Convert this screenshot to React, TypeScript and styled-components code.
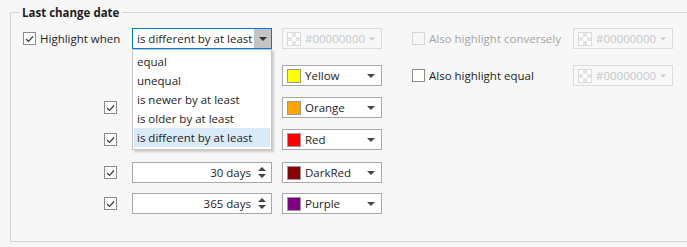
import React from "react";
import styled, { createGlobalStyle, css } from "styled-components";

const Global = createGlobalStyle`
  html, body {
    margin: 0;
    padding: 0;
    background: #f7f7f7;
    overflow: hidden;
  }
  body {
    font-family: "Segoe UI", "Open Sans", "Noto Sans", sans-serif;
    font-size: 11.5px;
    color: #1e1e1e;
  }
`;

const Page = styled.div`
  width: 687px;
  height: 247px;
  padding: 12px 0 0 10px;
  box-sizing: border-box;
  overflow: hidden;
`;

const GroupBox = styled.fieldset`
  position: relative;
  margin: 0;
  width: 720px;
  height: 230px;
  box-sizing: border-box;
  border: 1px solid #d5d5d5;
  padding: 15px 0 0 12px;
`;

const Legend = styled.div`
  position: absolute;
  top: -8px;
  left: 8px;
  padding: 0 3px 0 3px;
  background: #f7f7f7;
  font-weight: 700;
  font-size: 11.5px;
  line-height: 16px;
`;

const Rows = styled.div`
  display: flex;
  flex-direction: column;
`;

const Row = styled.div<{ $top: number }>`
  display: flex;
  align-items: center;
  height: 21px;
  margin-top: ${(p) => p.$top}px;
`;

const LeadCell = styled.div<{ $end?: boolean }>`
  width: 109px;
  display: flex;
  align-items: center;
  justify-content: ${(p) => (p.$end ? "flex-end" : "flex-start")};
  padding-right: ${(p) => (p.$end ? "15px" : "0")};
  box-sizing: border-box;
`;

const MidCell = styled.div`
  position: relative;
  width: 140px;
  height: 21px;
  margin-right: 10px;
`;

const ColorCell = styled.div`
  width: 100px;
  margin-right: 30px;
`;

const OptionCell = styled.div`
  width: 161px;
  display: flex;
  align-items: center;
`;

const Box = styled.span<{ $disabled?: boolean }>`
  width: 13px;
  height: 13px;
  box-sizing: border-box;
  border: 1px solid ${(p) => (p.$disabled ? "#d6d6d6" : "#8c8c8c")};
  background: ${(p) => (p.$disabled ? "#f7f7f7" : "#ffffff")};
  display: flex;
  align-items: center;
  justify-content: center;
  flex: none;
`;

const Label = styled.span<{ $disabled?: boolean }>`
  margin-left: 4px;
  white-space: nowrap;
  color: ${(p) => (p.$disabled ? "#a6a6a6" : "#1e1e1e")};
`;

const Check = ({ on, disabled }: { on?: boolean; disabled?: boolean }) => (
  <Box $disabled={disabled}>
    {on && (
      <svg width="9" height="8" viewBox="0 0 9 8">
        <path d="M1 4 L3.5 6.5 L8 1.5" fill="none" stroke="#3c3c3c" strokeWidth="1.2" />
      </svg>
    )}
  </Box>
);

const fieldBase = css`
  height: 21px;
  box-sizing: border-box;
  display: flex;
  align-items: center;
  background: #ffffff;
  white-space: nowrap;
`;

const Combo = styled.div<{ $focus?: boolean }>`
  ${fieldBase};
  width: 140px;
  border: 1px solid ${(p) => (p.$focus ? "#0078d7" : "#a0a0a0")};
  padding-left: 4px;
`;

const ComboText = styled.span`
  flex: 1;
`;

const ComboButton = styled.span`
  width: 17px;
  height: 19px;
  background: #c4c4c4;
  display: flex;
  align-items: center;
  justify-content: center;
`;

const ColorCombo = styled.div<{ $disabled?: boolean }>`
  ${fieldBase};
  width: 100px;
  border: 1px solid ${(p) => (p.$disabled ? "#dcdcdc" : "#a8a8a8")};
  background: ${(p) => (p.$disabled ? "#f7f7f7" : "#ffffff")};
  color: ${(p) => (p.$disabled ? "#c4c8cf" : "#1e1e1e")};
  padding: 0 6px 0 4px;
  gap: 4px;
`;

const Swatch = styled.span<{ $color: string }>`
  width: 14px;
  height: 14px;
  box-sizing: border-box;
  border: 1px solid #9a9a9a;
  background: ${(p) => p.$color};
  flex: none;
`;

const Checker = styled.span`
  width: 14px;
  height: 14px;
  box-sizing: border-box;
  border: 1px solid #dadada;
  flex: none;
  background-color: #ffffff;
  background-image: linear-gradient(45deg, #e3e3e3 25%, transparent 25%, transparent 75%, #e3e3e3 75%),
    linear-gradient(45deg, #e3e3e3 25%, transparent 25%, transparent 75%, #e3e3e3 75%);
  background-size: 8px 8px;
  background-position: 0 0, 4px 4px;
`;

const ColorName = styled.span`
  flex: 1;
`;

const Arrow = ({ color = "#444" }: { color?: string }) => (
  <svg width="8" height="4" viewBox="0 0 8 4">
    <path d="M0 0 H8 L4 4 Z" fill={color} />
  </svg>
);

const Spin = styled.div`
  ${fieldBase};
  width: 140px;
  border: 1px solid #a8a8a8;
  padding: 0 5px 0 4px;
`;

const SpinValue = styled.span`
  flex: 1;
  text-align: right;
  padding-right: 7px;
`;

const SpinArrows = styled.span`
  display: flex;
  flex-direction: column;
  gap: 3px;
`;

const List = styled.div`
  position: absolute;
  top: 21px;
  left: 0;
  width: 140px;
  box-sizing: border-box;
  border: 1px solid #c6c6c6;
  background: #ffffff;
  padding: 2px 1px;
  box-shadow: 2px 2px 2px rgba(0, 0, 0, 0.18);
  z-index: 5;
`;

const Item = styled.div<{ $selected?: boolean }>`
  height: 19px;
  line-height: 19px;
  padding-left: 3px;
  background: ${(p) => (p.$selected ? "#dbeaf7" : "transparent")};
`;

const ColorBox = ({ color, name }: { color: string; name: string }) => (
  <ColorCombo>
    <Swatch $color={color} />
    <ColorName>{name}</ColorName>
    <Arrow />
  </ColorCombo>
);

const NoColor = () => (
  <ColorCombo $disabled>
    <Checker />
    <ColorName>#00000000</ColorName>
    <Arrow color="#c8c8c8" />
  </ColorCombo>
);

const SpinBox = ({ value }: { value: string }) => (
  <Spin>
    <SpinValue>{value}</SpinValue>
    <SpinArrows>
      <svg width="8" height="4" viewBox="0 0 8 4">
        <path d="M0 4 H8 L4 0 Z" fill="#444" />
      </svg>
      <svg width="8" height="4" viewBox="0 0 8 4">
        <path d="M0 0 H8 L4 4 Z" fill="#444" />
      </svg>
    </SpinArrows>
  </Spin>
);

const options = [
  "equal",
  "unequal",
  "is newer by at least",
  "is older by at least",
  "is different by at least",
];

// spin boxes of the first two levels sit under the open list
const levels = [
  { days: "", color: "#ffa500", name: "Orange", top: 11 },
  { days: "", color: "#ff0000", name: "Red", top: 11 },
  { days: "30 days", color: "#8b0000", name: "DarkRed", top: 12 },
  { days: "365 days", color: "#800080", name: "Purple", top: 10 },
];

export default function App() {
  return (
    <>
      <Global />
      <Page>
        <GroupBox>
          <Legend>Last change date</Legend>
          <Rows>
            <Row $top={0}>
              <LeadCell>
                <Check on />
                <Label>Highlight when</Label>
              </LeadCell>
              <MidCell>
                <Combo $focus>
                  <ComboText>is different by at least</ComboText>
                  <ComboButton>
                    <Arrow color="#333" />
                  </ComboButton>
                </Combo>
                <List>
                  {options.map((o, i) => (
                    <Item key={o} $selected={i === options.length - 1}>
                      {o}
                    </Item>
                  ))}
                </List>
              </MidCell>
              <ColorCell>
                <NoColor />
              </ColorCell>
              <OptionCell>
                <Check disabled />
                <Label $disabled>Also highlight conversely</Label>
              </OptionCell>
              <NoColor />
            </Row>
            <Row $top={16}>
              <LeadCell />
              <MidCell />
              <ColorCell>
                <ColorBox color="#ffff00" name="Yellow" />
              </ColorCell>
              <OptionCell>
                <Check />
                <Label>Also highlight equal</Label>
              </OptionCell>
              <NoColor />
            </Row>
            {levels.map((l) => (
              <Row key={l.name} $top={l.top}>
                <LeadCell $end>
                  <Check on />
                </LeadCell>
                <MidCell>{l.days && <SpinBox value={l.days} />}</MidCell>
                <ColorCell>
                  <ColorBox color={l.color} name={l.name} />
                </ColorCell>
              </Row>
            ))}
          </Rows>
        </GroupBox>
      </Page>
    </>
  );
}
